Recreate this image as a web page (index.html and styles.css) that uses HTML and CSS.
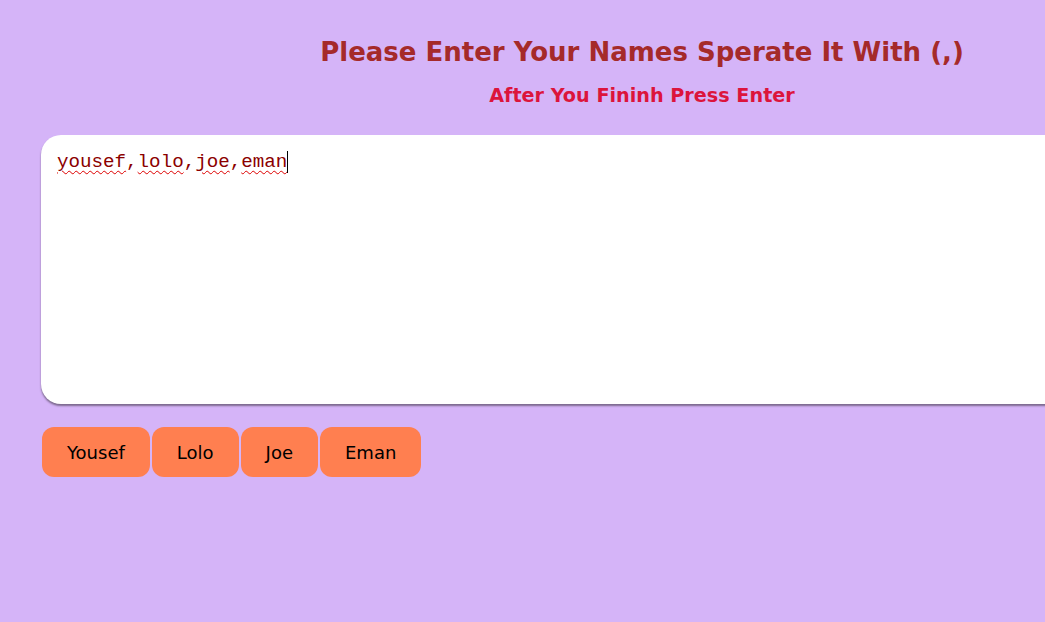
FILE: index.html
```html
<!DOCTYPE html>
<html>
<head>
<meta charset="utf-8">
<link rel="stylesheet" href="styles.css">
</head>
<body>
<div class="page">
  <h1 class="title">Please Enter Your Names Sperate It With (,)</h1>
  <h2 class="subtitle">After You Fininh Press Enter</h2>
  <div class="box"><span class="typed"><span class="sp">yousef</span>,<span class="sp">lolo</span>,<span class="sp">joe</span>,<span class="sp">eman</span></span><span class="caret"></span></div>
  <div class="tags">
    <span class="tag">Yousef</span>
    <span class="tag">Lolo</span>
    <span class="tag">Joe</span>
    <span class="tag">Eman</span>
  </div>
</div>
</body>
</html>
```
FILE: styles.css
```css
html, body {
  margin: 0;
  padding: 0;
  background: #d5b4f8;
  overflow: hidden;
  height: 100%;
}
.page {
  width: 1202px;
  margin-left: 41px;
  padding-top: 35px;
  font-family: "DejaVu Sans", Verdana, sans-serif;
}
.title {
  margin: 0;
  text-align: center;
  font-size: 26px;
  font-weight: bold;
  color: #a52a2a;
  line-height: 34px;
}
.subtitle {
  margin: 15px 0 0;
  text-align: center;
  font-size: 19.2px;
  font-weight: bold;
  color: #dc143c;
  line-height: 24px;
}
.box {
  margin-top: 27px;
  height: 269px;
  box-sizing: border-box;
  background: #fff;
  border-radius: 20px;
  box-shadow: 0 2px 2px #7d6a8f;
  padding: 16px 16px;
  font-family: "Liberation Mono", "Courier New", monospace;
  font-size: 19.2px;
  color: #8b0000;
  display: flex;
  align-items: flex-start;
}
.sp {
  text-decoration: underline wavy #d00;
  text-decoration-thickness: 1px;
  text-underline-offset: 3px;
}
.caret {
  display: inline-block;
  width: 1px;
  height: 22px;
  background: #000;
}
.tags {
  margin-top: 23px;
  display: flex;
  gap: 2px;
  margin-left: 1px;
}
.tag {
  height: 50px;
  padding: 0 25px;
  display: flex;
  align-items: center;
  background: #ff7f50;
  border-radius: 12px;
  font-size: 18px;
  color: #000;
}
```
